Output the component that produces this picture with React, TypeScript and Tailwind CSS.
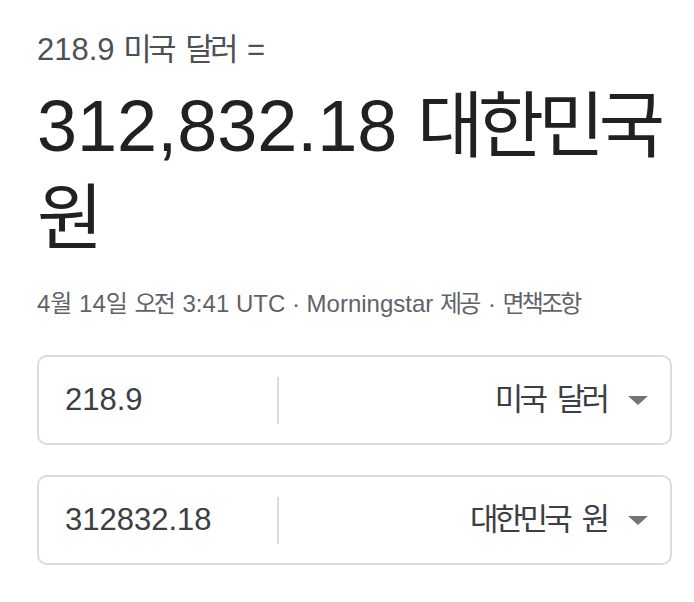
const font = { fontFamily: '"Liberation Sans", "Noto Sans CJK KR", sans-serif' };

// Hangul in the reference is set narrower than Noto's full-width advance
function Ko({ children, wide }: { children: React.ReactNode; wide?: boolean }) {
  return (
    <span className={wide ? "mr-[0.08em] tracking-[-0.08em]" : "mr-[0.12em] tracking-[-0.12em]"}>
      {children}
    </span>
  );
}

function Caret() {
  return (
    <svg width="20" height="9" viewBox="0 0 20 9" className="shrink-0">
      <polygon points="0,0 20,0 10,9" fill="#70757a" />
    </svg>
  );
}

function CurrencyRow({ amount, currency }: { amount: string; currency: React.ReactNode }) {
  return (
    <div className="flex h-[90px] items-center rounded-[10px] border-2 border-[#dadce0] bg-white">
      <div className="flex h-[47px] w-[240px] shrink-0 items-center border-r-2 border-[#dadce0] pl-[26px] text-[31px] text-[#3c4043]">
        {amount}
      </div>
      <div className="flex flex-1 items-center justify-end gap-[18px] pr-[22px] text-[31px] text-[#3c4043]">
        <span>{currency}</span>
        <Caret />
      </div>
    </div>
  );
}

export default function App() {
  return (
    <div className="min-h-[602px] w-[694px] bg-white pl-[37px] pr-[23px] pt-[30px]" style={font}>
      <p className="text-[31px] leading-[40px] text-[#4d5156]">
        218.9 <Ko>미국</Ko> <Ko>달러</Ko> =
      </p>
      <h1 className="mt-[10px] text-[72px] leading-[92px] text-[#202124]">
        312,832.18 <Ko wide>대한민국</Ko> <Ko wide>원</Ko>
      </h1>
      <p className="mt-[24px] text-[24px] leading-[32px] text-[#5f6368]">
        4<Ko>월</Ko> 14<Ko>일</Ko> <Ko>오전</Ko> 3:41 UTC · Morningstar <Ko>제공</Ko> · <Ko>면책조항</Ko>
      </p>
      <div className="mr-[-1px] mt-[35px] flex flex-col gap-[30px]">
        <CurrencyRow amount="218.9" currency={<><Ko>미국</Ko> <Ko>달러</Ko></>} />
        <CurrencyRow amount="312832.18" currency={<><Ko>대한민국</Ko> <Ko>원</Ko></>} />
      </div>
    </div>
  );
}
